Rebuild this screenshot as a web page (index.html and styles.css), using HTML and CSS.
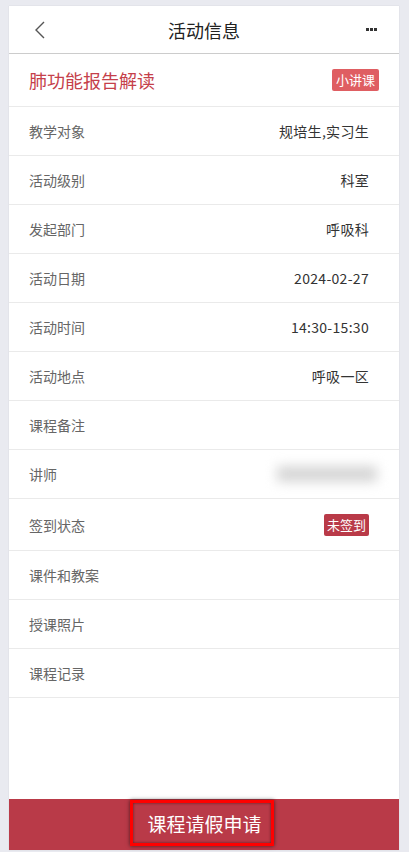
FILE: index.html
```html
<!DOCTYPE html>
<html>
    <head>
        <title>活动信息</title>
        <meta charset="utf-8">
        <link rel="stylesheet" href="styles.css">
    </head>
    <body>
        <div class="page">
            <div class="header">
                <svg class="back" width="12" height="18" viewBox="0 0 12 18">
                    <path d="M10 1 L2 9 L10 17" fill="none" stroke="#555" stroke-width="1.4"/>
                </svg>
                <div class="header-title">活动信息</div>
                <div class="more"><span></span><span></span><span></span></div>
            </div>

            <div class="title-row">
                <div class="course-name">肺功能报告解读</div>
                <span class="tag tag-light">小讲课</span>
            </div>

            <div class="row"><span class="label">教学对象</span><span class="value">规培生,实习生</span></div>
            <div class="row"><span class="label">活动级别</span><span class="value">科室</span></div>
            <div class="row"><span class="label">发起部门</span><span class="value">呼吸科</span></div>
            <div class="row"><span class="label">活动日期</span><span class="value">2024-02-27</span></div>
            <div class="row"><span class="label">活动时间</span><span class="value">14:30-15:30</span></div>
            <div class="row"><span class="label">活动地点</span><span class="value">呼吸一区</span></div>
            <div class="row"><span class="label">课程备注</span><span class="value"></span></div>
            <div class="row"><span class="label">讲师</span><span class="blurred"></span></div>
            <div class="row row-tall"><span class="label">签到状态</span><span class="tag tag-dark">未签到</span></div>
            <div class="row"><span class="label">课件和教案</span></div>
            <div class="row"><span class="label">授课照片</span></div>
            <div class="row"><span class="label">课程记录</span></div>

            <div class="spacer"></div>

            <div class="footer">
                <div class="leave-btn">课程请假申请</div>
            </div>
        </div>
    </body>
</html>
```

FILE: styles.css
```css
body {
    margin: 0;
    background-color: #e9eaf0;
    font-family: "Noto Sans CJK SC", "Noto Sans", sans-serif;
    padding: 6px 10px 2px 9px;
}
.page {
    background-color: #ffffff;
    height: 844px;
    display: flex;
    flex-direction: column;
    box-shadow: 0 0 1px rgba(0, 0, 0, 0.15);
}
.header {
    height: 47px;
    border-bottom: 1px solid #cccccc;
    display: flex;
    align-items: center;
    justify-content: space-between;
    padding: 0 22px 0 25px;
}
.header-title {
    font-size: 18px;
    color: #222;
    margin-left: -4px;
}
.more {
    display: flex;
    gap: 1px;
}
.more span {
    width: 3px;
    height: 3px;
    background-color: #333;
}
.title-row {
    height: 52px;
    border-bottom: 1px solid #eaeaea;
    display: flex;
    align-items: center;
    justify-content: space-between;
    padding: 0 20px;
}
.course-name {
    font-size: 18px;
    color: #c5404a;
}
.tag {
    color: #ffffff;
    font-size: 13px;
    border-radius: 2px;
    padding: 0 4px;
    height: 22px;
    line-height: 22px;
}
.tag-light { background-color: #df5e62; }
.tag-dark { background-color: #b93a48; padding: 0 3px; }
.row {
    height: 48px;
    border-bottom: 1px solid #eaeaea;
    display: flex;
    align-items: center;
    justify-content: space-between;
    padding: 0 30px 0 20px;
}
.row-tall { height: 51px; }
.label {
    font-size: 14px;
    color: #666;
}
.value {
    font-size: 14px;
    color: #333;
    letter-spacing: 0.3px;
}
.blurred {
    width: 100px;
    height: 16px;
    background-color: #d6d6d6;
    filter: blur(6px);
    margin-right: -8px;
}
.spacer { flex: 1; }
.footer {
    height: 51px;
    background-color: #b93a48;
    display: flex;
    justify-content: center;
}
.leave-btn {
    margin-top: 1px;
    height: 40px;
    box-sizing: content-box;
    border: 3px solid #ff0000;
    box-shadow: 0 0 4px rgba(0, 0, 0, 0.6), inset 0 0 3px rgba(0, 0, 0, 0.5);
    color: #ffffff;
    font-size: 19px;
    display: flex;
    align-items: center;
    justify-content: center;
    padding-left: 6px;
    width: 132px;
    margin-left: -5px;
}
```
